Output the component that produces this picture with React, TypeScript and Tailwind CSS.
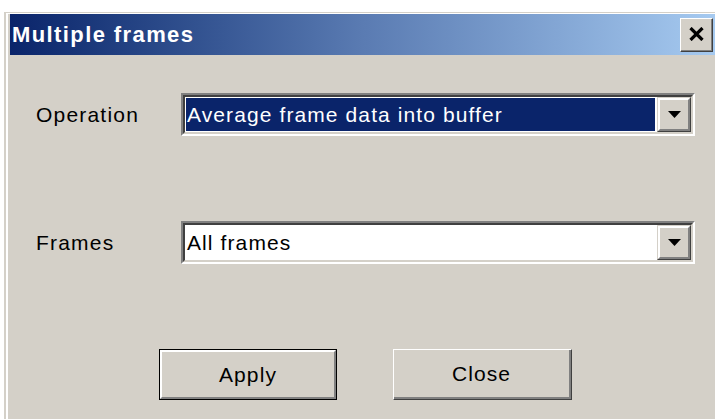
const font = { fontFamily: '"Liberation Sans", Arial, sans-serif' };

function Arrow() {
  return (
    <svg width="13" height="7" viewBox="0 0 13 7">
      <polygon points="0,0 13,0 6.5,7" fill="#000" />
    </svg>
  );
}

function DropButton() {
  return (
    <div className="h-full w-[34px] border border-t-[#d4d0c8] border-l-[#d4d0c8] border-b-[#404040] border-r-[#404040]">
      <div className="flex h-full items-center justify-center border-2 border-t-white border-l-white border-b-[#808080] border-r-[#808080] bg-[#d4d0c8]">
        <Arrow />
      </div>
    </div>
  );
}

function Combo({ value, selected }: { value: string; selected?: boolean }) {
  return (
    <div className="h-[43px] w-[514px] border-2 border-t-[#808080] border-l-[#808080] border-b-white border-r-white">
      <div className="flex h-full border-2 border-t-[#404040] border-l-[#404040] border-b-[#d4d0c8] border-r-[#d4d0c8] bg-white">
        <div className="flex-1 p-[1px] pr-[2px]">
          <div
            className={
              'flex h-full items-center pl-[1px] text-[21px] tracking-[1.1px] ' +
              (selected ? 'bg-[#0a246a] text-white' : 'text-black')
            }
          >
            {value}
          </div>
        </div>
        <DropButton />
      </div>
    </div>
  );
}

function Row({ label, value, selected }: { label: string; value: string; selected?: boolean }) {
  return (
    <div className="flex items-center">
      <div className="w-[171px] pl-[26px] text-[21px] tracking-[1.2px] text-black">{label}</div>
      <Combo value={value} selected={selected} />
    </div>
  );
}

export default function App() {
  return (
    <div className="h-[419px] w-[715px] overflow-hidden bg-white pl-[4px] pt-[12px]" style={font}>
      <div className="h-full border-l-2 border-t border-[#d4d0c8]">
        <div className="flex h-full flex-col border-l-2 border-t border-white bg-[#d4d0c8] pl-[2px]">
          {/* caption */}
          <div className="flex h-[41px] items-center justify-between bg-gradient-to-r from-[#0a246a] via-[#5a7bb2] to-[#a6caf0]">
            <span className="pl-[2px] text-[22px] font-bold tracking-[1.4px] text-white">Multiple frames</span>
            <div className="mr-[2px] h-[34px] w-[33px] border border-t-white border-l-white border-b-[#404040] border-r-[#404040] bg-[#d4d0c8]">
              <div className="flex h-full items-center justify-center border-b border-r border-[#808080]">
                <svg width="15" height="14" viewBox="0 0 15 14">
                  <path d="M1.5 1 L13.5 13 M13.5 1 L1.5 13" stroke="#000" strokeWidth="3.2" />
                </svg>
              </div>
            </div>
          </div>

          {/* fields */}
          <div className="mt-[38px]">
            <Row label="Operation" value="Average frame data into buffer" selected />
          </div>
          <div className="mt-[85px]">
            <Row label="Frames" value="All frames" />
          </div>

          {/* buttons */}
          <div className="mt-[85px] flex gap-[56px] pl-[149px]">
            <button className="h-[51px] w-[178px] border border-black bg-[#d4d0c8] p-0">
              <div className="flex h-full items-center justify-center border-2 border-t-white border-l-white border-b-[#808080] border-r-[#808080] text-[21px] tracking-[1.1px] text-black">
                Apply
              </div>
            </button>
            <button className="h-[51px] w-[179px] border border-t-white border-l-white border-b-[#404040] border-r-[#404040] bg-[#d4d0c8] p-0">
              <div className="flex h-full items-center justify-center border-b-2 border-r-2 border-[#808080] text-[21px] tracking-[1.1px] text-black">
                Close
              </div>
            </button>
          </div>
        </div>
      </div>
    </div>
  );
}
